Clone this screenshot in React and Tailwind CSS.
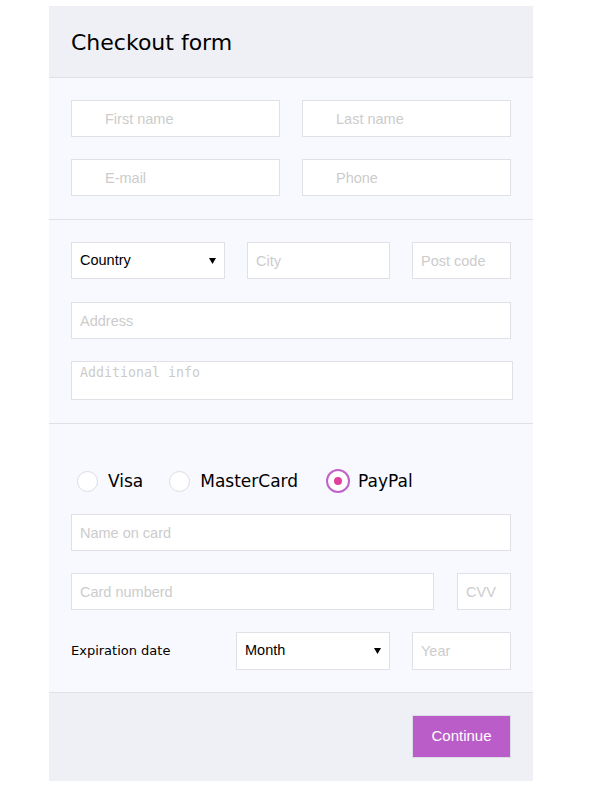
import React from "react";

const inputBase =
  "block h-[37px] border border-[#e0e0e6] bg-white text-[14.5px] text-black outline-none placeholder:text-[#cccccc]";
const fontArial = { fontFamily: '"Liberation Sans", Arial, sans-serif' };

function Select({ label, className }) {
  return (
    <div className={"relative " + className}>
      <select
        defaultValue=""
        className={inputBase + " w-full appearance-none pl-[8px] pr-6 rounded-none"}
        style={fontArial}
      >
        <option value="">{label}</option>
      </select>
      <svg
        className="pointer-events-none absolute right-[9px] top-1/2 -translate-y-1/2"
        width="7"
        height="6"
        viewBox="0 0 7 6"
      >
        <path d="M0 0H7L3.5 6Z" fill="#000" />
      </svg>
    </div>
  );
}

function Radio({ label, checked, className = "" }) {
  return (
    <label className={"flex items-center " + className}>
      {checked ? (
        <span className="flex h-[24px] w-[24px] items-center justify-center rounded-full border-2 border-[#c062c9] bg-white">
          <span className="h-[8px] w-[8px] rounded-full bg-[#e0409e]" />
        </span>
      ) : (
        <span className="h-[21px] w-[21px] rounded-full border border-[#dcdce4] bg-white" />
      )}
      <span
        className={
          "text-[17px] leading-none text-black " + (checked ? "ml-[8px]" : "ml-[10px]")
        }
        style={{ fontFamily: '"DejaVu Sans", Verdana, sans-serif' }}
      >
        {label}
      </span>
    </label>
  );
}

export default function App() {
  return (
    <div className="min-h-[807px] bg-white pt-[6px]">
      <div className="ml-[49px] w-[484px] bg-[#f8f9fe]">
        <div className="flex h-[72px] items-center border-b border-[#e0e0e6] bg-[#eff0f5] pl-[22px] pt-[2px]">
          <h1
            className="text-[22px] leading-none text-black"
            style={{ fontFamily: '"DejaVu Sans", Verdana, sans-serif' }}
          >
            Checkout form
          </h1>
        </div>

        <div className="grid grid-cols-2 gap-x-[22px] gap-y-[22px] border-b border-[#e0e0e6] p-[22px] pb-[23px]">
          <input className={inputBase + " w-full pl-[33px]"} style={fontArial} placeholder="First name" />
          <input className={inputBase + " w-full pl-[33px]"} style={fontArial} placeholder="Last name" />
          <input className={inputBase + " w-full pl-[33px]"} style={fontArial} placeholder="E-mail" />
          <input className={inputBase + " w-full pl-[33px]"} style={fontArial} placeholder="Phone" />
        </div>

        <div className="flex flex-col gap-[22px] border-b border-[#e0e0e6] p-[22px] pb-[23px]">
          <div className="mb-[1px] flex gap-[22px]">
            <Select label="Country" className="w-[154px]" />
            <input className={inputBase + " w-[143px] pl-[8px]"} style={fontArial} placeholder="City" />
            <input className={inputBase + " w-[99px] pl-[8px]"} style={fontArial} placeholder="Post code" />
          </div>
          <input className={inputBase + " w-[440px] pl-[8px]"} style={fontArial} placeholder="Address" />
          <textarea
            className="block h-[39px] w-[442px] resize-none border border-[#e0e0e6] bg-white px-[8px] pt-[3px] text-[13.3px] leading-[16px] outline-none placeholder:text-[#cccccc]"
            style={{ fontFamily: '"DejaVu Sans Mono", monospace' }}
            placeholder="Additional info"
          />
        </div>

        <div className="flex flex-col gap-[22px] border-b border-[#e0e0e6] px-[22px] pb-[22px] pt-[45px]">
          <div className="mb-[-1px] flex h-[24px] items-center">
            <Radio label="Visa" className="ml-[6px]" />
            <Radio label="MasterCard" className="ml-[26px]" />
            <Radio label="PayPal" checked className="ml-[28px]" />
          </div>
          <input className={inputBase + " w-[440px] pl-[8px]"} style={fontArial} placeholder="Name on card" />
          <div className="flex gap-[23px]">
            <input className={inputBase + " w-[363px] pl-[8px]"} style={fontArial} placeholder="Card numberd" />
            <input className={inputBase + " w-[54px] pl-[8px]"} style={fontArial} placeholder="CVV" />
          </div>
          <div className="flex items-center">
            <span
              className="w-[165px] text-[13px] text-black"
              style={{ fontFamily: '"DejaVu Sans", Verdana, sans-serif' }}
            >
              Expiration date
            </span>
            <Select label="Month" className="w-[154px] [&_select]:h-[38px]" />
            <input className={inputBase + " ml-[22px] h-[38px] w-[99px] pl-[8px]"} style={fontArial} placeholder="Year" />
          </div>
        </div>

        <div className="flex justify-end bg-[#eff0f5] px-[22px] pb-[23px] pt-[22px]">
          <button
            className="h-[43px] w-[99px] border border-[#dcdce4] bg-[#bb5dc9] text-[15px] text-white"
            style={fontArial}
          >
            Continue
          </button>
        </div>
      </div>
    </div>
  );
}
